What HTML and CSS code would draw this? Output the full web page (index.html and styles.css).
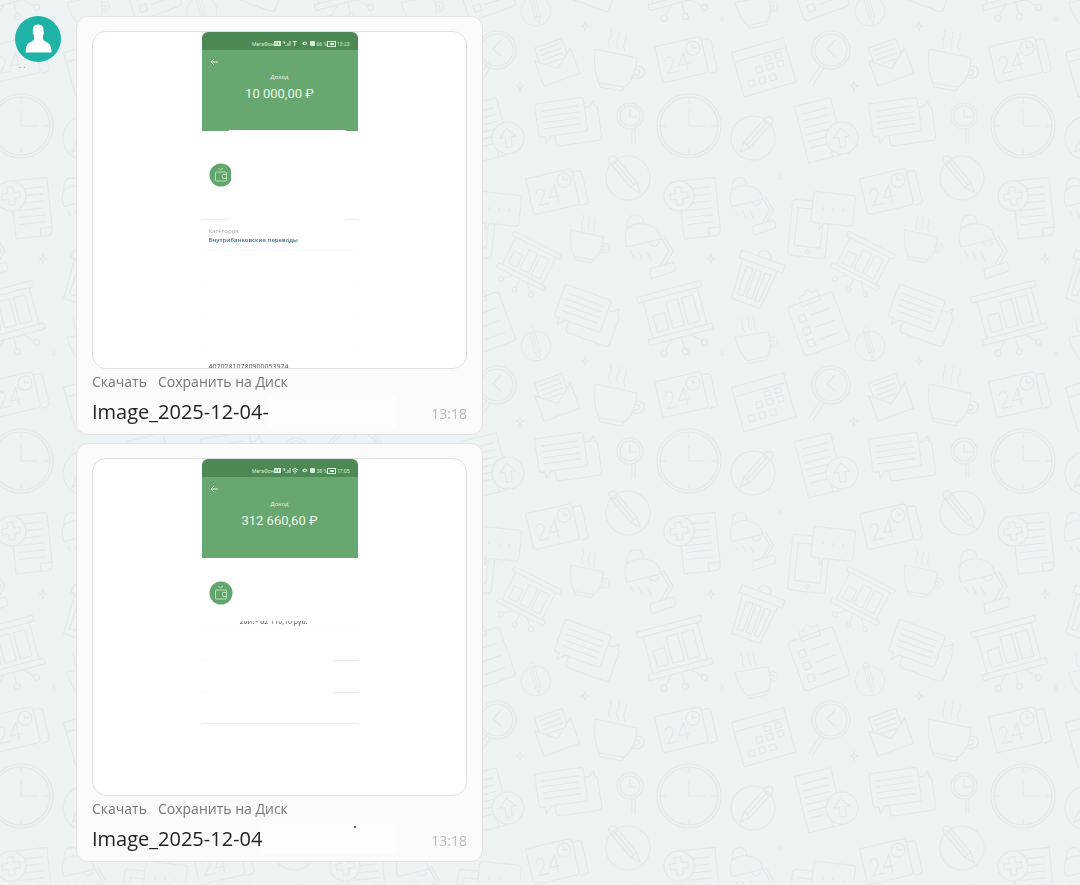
FILE: index.html
```html
<!DOCTYPE html>
<html lang="ru">
<head>
<meta charset="utf-8">
<title>Чат</title>
<meta name="viewport" content="width=device-width, initial-scale=1">
<link rel="stylesheet" href="styles.css">
</head>
<body>
<svg class="wallpaper" aria-hidden="true">
  <defs>
    <g id="cup">
      <path d="M-22-18L20-9Q18 14 7 20L-18 16Q-24 4-22-18ZM-18 16L-17 20L5 24L7 20M19-1Q29-1 27 7Q24 14 14 10M18 3Q24 2 22 7Q20 9 16 8M-7-19Q-10-25-6-31V-37M1-18Q-2-24 2-30V-35M8-16Q5-22 9-28V-33"/>
    </g>
    <g id="pencil">
      <circle r="22"/>
      <path d="M-4-20V9L0 19L4 9V-20M-4-20Q-5-27 0-28Q5-27 4-20ZM-4 9H4M0-20V9"/>
    </g>
    <g id="date">
      <path d="M-24-18H20Q23-18 23-14V16Q23 19 20 19H-21Q-24 19-24 16ZM23-14H30Q32-14 32-11V17Q32 20 29 20H24"/>
      <circle cx="13" cy="-8" r="7"/><path d="M13-12V-8H17"/>
      <path d="M-17-2Q-15-7-10-4Q-7 0-13 6L-17 11H-6M3 12V-6L-5 6H6"/>
    </g>
    <g id="board">
      <path d="M-33-25H33V-19H-33ZM-33 19H33V25H-33ZM-28-19V19M28-19V19M-22-3H-10V14H-22ZM-6-13H6V14H-6ZM10-13H22V14H10ZM-10 25L-19 34M0 25V37M10 25L19 34"/>
      <circle cx="-21" cy="36" r="3"/><circle cx="0" cy="40" r="3"/><circle cx="21" cy="36" r="3"/>
    </g>
    <g id="chat">
      <path d="M-24-20H19Q22-20 22-17V11Q22 14 19 14H-15L-21 21V14H-24Q-27 14-27 11V-17Q-27-20-24-20ZM-21-12H16M-21-6H16M-21 0H16M-21 6H16M22-10H27L32-15V-10Q35-9 35-5V21Q35 25 31 25H-7Q-11 25-11 21V14"/>
    </g>
    <g id="lamp">
      <path d="M-20-13Q-21-28-10-27Q-3-26-4-18Q12-17 14-3L-20 5Q-24-5-20-13ZM-20-13Q-14-19-4-18M2 1Q8 8 12 0M13-6L22 9L13 24M17-6L26 9L18 23M3 27L26 20Q30 25 28 29L4 37ZM-16 10L-13 15M-8 10L-5 17M0 10L4 18"/>
    </g>
    <g id="page">
      <path d="M-20-29H17V21Q17 29 11 29H-20ZM17 21H5V29M-15-20H11M-15-13H11M-15-6H11M-15 1H11M-15 8H11M-15 15H11"/>
    </g>
    <g id="star"><path d="M0-5Q0 0 4 0Q0 0 0 5Q0 0-4 0Q0 0 0-5Z"/></g>
    <g id="tile">
      <g><circle cx="497" cy="385" r="19"/><circle cx="497" cy="385" r="16"/><path d="M501 375L493 384L501 391M486 401L475 418M490 403L479 420"/></g>
      <g transform="translate(555 396) rotate(-20)"><path d="M-19-7L0 8L19-7V20H-19ZM-15-4V-19H14V-3M-11-15H10M-11-10H10M-11-5H10M-8 0H7"/></g>
      <use href="#cup" transform="translate(617 402)"/>
      <use href="#date" transform="translate(682 394) rotate(-13)"/>
      <g transform="translate(765 403) rotate(-16)"><path d="M-28-24H26V22H-28ZM-28-14H26M-20 8H-14V14H-20ZM-9 8H-3V14H-9ZM2 8H8V14H2ZM-9-3H-3V3H-9ZM2-3H8V3H2ZM13-3H19V3H13ZM2-11H8V-6H2ZM13-11H19V-6H13Z"/></g>
      <use href="#page" transform="translate(487 465) rotate(-14)"/>
      <g transform="translate(508 473) rotate(-8)"><circle class="fill" r="16"/><path d="M0-10L8-1H3V9H-3V-1H-8Z"/></g>
      <use href="#chat" transform="translate(564 455) rotate(-8)"/>
      <g><circle cx="630" cy="451" r="13"/><circle cx="630" cy="451" r="10"/><path d="M630 444V452H637M632 464V478M635 464V478"/></g>
      <g transform="translate(689 461)"><circle r="32"/><circle r="29"/><path d="M0-15V0H16M0-28V-23M0 23V28M-28 0H-23M23 0H28"/></g>
      <use href="#pencil" transform="translate(753 473) rotate(42)"/>
      <use href="#date" transform="translate(553 191) rotate(-13)"/>
      <use href="#pencil" transform="translate(628 178) rotate(-40)"/>
      <use href="#page" transform="translate(701 208) rotate(-6)"/>
      <g transform="translate(679 196) rotate(-8)"><circle class="fill" r="15"/><path d="M-3-9H3V-3H9V3H3V9H-3V3H-9V-3H-3Z"/></g>
      <use href="#lamp" transform="translate(750 202) scale(.9)"/>
      <g transform="translate(476 229) rotate(6)"><path d="M-16-28H14Q18-28 18-24V24Q18 28 14 28H-16Q-20 28-20 24V-24Q-20-28-16-28ZM-14-20H12V18H-14Z"/><circle cy="23" r="2"/><path class="fill" d="M3-38H39Q42-38 42-35V-10Q42-7 39-7H13L9 0V-7H3Q0-7 0-10V-35Q0-38 3-38Z"/><path d="M11-23V-21M21-23V-21M31-23V-21"/></g>
      <use href="#board" transform="translate(529 261) rotate(27) scale(.8)"/>
      <use href="#cup" transform="translate(588 244) scale(.78)"/>
      <use href="#lamp" transform="translate(647 242)"/>
      <g transform="translate(755 278) rotate(20)"><path d="M-22-22H24V-14H-22ZM-18-14L-15 27H15L19-14M-12-8H-5V21H-11ZM-2-8H4V21H-2ZM8-8H14L12 21H7ZM-5-22Q-5-29 1-29Q8-29 8-22"/></g>
      <g transform="translate(484 322) rotate(-20)"><path d="M-20-24H20Q24-24 24-20V24Q24 28 20 28H-20Q-24 28-24 24V-20Q-24-24-20-24ZM-10-24V-30H-4Q0-38 4-30H10V-20H-10ZM-17-12H-10V-5H-17ZM-17 1H-10V8H-17ZM-17 14H-10V21H-17ZM-4-9H16M-4 4H16M-4 17H16"/></g>
      <use href="#chat" transform="translate(584 312) rotate(20)"/>
      <use href="#board" transform="translate(675 313) rotate(-15)"/>
      <use href="#pencil" transform="translate(536 346) rotate(-15) scale(.68)"/>
      <use href="#cup" transform="translate(756 344) rotate(-22) scale(.78)"/>
      <use href="#star" transform="translate(711 259)"/>
      <use href="#star" transform="translate(585 361)"/>
      <use href="#star" transform="translate(520 421)"/>
      <use href="#star" transform="translate(722 354) scale(.6)"/>
      <use href="#star" transform="translate(780 178) scale(.6)"/>
    </g>
    <g id="column">
      <use href="#tile" y="-335"/><use href="#tile"/><use href="#tile" y="335"/><use href="#tile" y="670"/>
    </g>
    <g id="wallet">
      <circle cx="12" cy="12" r="11.500" fill="#62a56d"/>
      <g fill="none" stroke="#b9e0b5" stroke-width="1"><rect x="6.500" y="9" width="11" height="9" rx="1"/><path d="M17.500 11.500H14Q12.500 13.500 14 15.500H17.500ZM9.500 5L11.500 7L14 5"/></g>
    </g>
  </defs>
  <g class="doodles">
    <use href="#column" x="-668"/><use href="#column" x="-334"/><use href="#column"/><use href="#column" x="334"/><use href="#column" x="668"/>
  </g>
</svg>

<main class="chat">
  <div class="author">
    <svg class="avatar" viewBox="0 0 46 46" role="img" aria-label="Пользователь">
      <circle cx="23" cy="23" r="23" fill="#1fb3a8"/>
      <path fill="#fff" d="M23 8.500C18.500 8.500 17.500 11.500 18 15C17.500 17 18 18 19 19.500V23C18 26 13.500 26 12 29C11 31 10.800 33.500 10.800 36.500H36.500C36.500 33.500 36 31 35 29C33.500 26 29 26 28 23V19.500C29 18 29 17 28.500 15C29 11.500 27.500 8.500 23 8.500Z"/>
    </svg>
    <span class="author-name">. .</span>
  </div>
  <div class="messages">
    <article class="message">
      <div class="preview">
        <div class="phone">
          <div class="status">
            <span>МегаФон</span>
            <svg width="27" height="7" viewBox="0 0 27 7"><rect y="1" width="7" height="5" fill="#d7eed8"/><path d="M2 2.500V4.500M4.500 2.500V4.500" stroke="#4d8954"/><path d="M9 2H11L10 4M12 6V5M14 6V3M16 6V1M18.500 1.500H23M20.700 2V6" stroke="#d7eed8" fill="none"/></svg>
            <svg width="16" height="7" viewBox="0 0 16 7"><path d="M1 3.500Q4-.5 6.500 3.500Q4 7 1 3.500Z" fill="#d7eed8"/><circle cx="4" cy="3.500" r="1" fill="#4d8954"/><rect x="9" y="1" width="5" height="5" rx="1" fill="#d7eed8"/></svg>
            <span>66 %</span>
            <svg width="10" height="6" viewBox="0 0 10 6"><rect x=".5" y=".5" width="8" height="5" fill="none" stroke="#d7eed8"/><rect x="3" y="2" width="4" height="2" fill="#d7eed8"/></svg>
            <span>13:23</span>
          </div>
          <div class="summary notched">
            <svg class="back" width="8" height="8" viewBox="0 0 8 8"><path d="M8 4H1M4 1L1 4L4 7"/></svg>
            <span class="kind">Доход</span>
            <strong class="amount">10 000,00 ₽</strong>
          </div>
          <svg class="wallet cut" width="22" height="24"><use href="#wallet"/></svg>
          <div class="category">
            <span class="label">Категория</span>
            <span class="value">Внутрибанковские переводы</span>
          </div>
          <div class="blank-rows"><i></i><i></i><i></i></div>
          <span class="account">40702810780900053974</span>
        </div>
      </div>
      <nav class="actions"><a href="#">Скачать</a><a href="#">Сохранить на Диск</a></nav>
      <div class="file"><span class="file-name">Image_2025-12-04-</span><span class="erased"></span><time>13:18</time></div>
    </article>

    <article class="message">
      <div class="preview">
        <div class="phone">
          <div class="status">
            <span>МегаФон</span>
            <svg width="27" height="7" viewBox="0 0 27 7"><rect y="1" width="7" height="5" fill="#d7eed8"/><path d="M2 2.500V4.500M4.500 2.500V4.500" stroke="#4d8954"/><path d="M9 2H11L10 4M12 6V5M14 6V3M16 6V1M18 3Q21 0 24 3M19 4.500Q21 3 23 4.500M21 5V6.500" stroke="#d7eed8" fill="none"/></svg>
            <svg width="16" height="7" viewBox="0 0 16 7"><path d="M1 3.500Q4-.5 6.500 3.500Q4 7 1 3.500Z" fill="#d7eed8"/><circle cx="4" cy="3.500" r="1" fill="#4d8954"/><rect x="9" y="1" width="5" height="5" rx="1" fill="#d7eed8"/></svg>
            <span>38 %</span>
            <svg width="10" height="6" viewBox="0 0 10 6"><rect x=".5" y=".5" width="8" height="5" fill="none" stroke="#d7eed8"/><rect x="3" y="2" width="4" height="2" fill="#d7eed8"/></svg>
            <span>17:05</span>
          </div>
          <div class="summary">
            <svg class="back" width="8" height="8" viewBox="0 0 8 8"><path d="M8 4H1M4 1L1 4L4 7"/></svg>
            <span class="kind">Доход</span>
            <strong class="amount">312 660,60 ₽</strong>
          </div>
          <svg class="wallet high" width="24" height="24"><use href="#wallet"/></svg>
          <div class="trimmed"><span>20И.* 62 110,10 руб.</span></div>
          <div class="ruled-rows"><i></i><i></i><i></i></div>
        </div>
      </div>
      <nav class="actions"><a href="#">Скачать</a><a href="#">Сохранить на Диск</a></nav>
      <div class="file"><span class="file-name">Image_2025-12-04</span><span class="erased speck"></span><time>13:18</time></div>
    </article>
  </div>
</main>
</body>
</html>
```
FILE: styles.css
```css
* { box-sizing: border-box; }

body {
  margin: 0;
  background: #edf2f5;
  font-family: "Open Sans", "Noto Sans", sans-serif;
  color: #222;
}

.wallpaper {
  position: fixed;
  inset: 0;
  width: 100%;
  height: 100%;
  z-index: -1;
}
.doodles { fill: none; stroke: #e3e8eb; stroke-width: 1.2; stroke-linejoin: round; stroke-linecap: round; }
.doodles .fill, .fill { fill: #edf2f5; }

.chat { display: flex; align-items: flex-start; gap: 15px; padding: 16px 15px; }
.author { display: flex; flex-direction: column; flex: 0 0 46px; }
.avatar { width: 46px; height: 46px; }
.author-name { padding-left: 4px; font-size: 8px; line-height: 6px; color: #777; }

.messages { display: flex; flex-direction: column; gap: 8px; flex: 0 1 407px; min-width: 0; }
.message {
  padding: 14px 15px 6px;
  border: 1px solid #e0e4e6;
  border-radius: 12px;
  background: #fbfbfb;
}
.preview {
  height: 338px;
  overflow: hidden;
  border: 1px solid #dfe0e1;
  border-radius: 14px;
  background: #fff;
}
.phone {
  display: flex;
  flex-direction: column;
  width: 156px;
  margin: 0 auto;
  border-radius: 6px 6px 0 0;
  overflow: hidden;
}
.status {
  display: flex;
  align-items: center;
  justify-content: flex-end;
  height: 18px;
  padding: 5px 8px 0 0;
  background: #4d8954;
  color: #d7eed8;
  font: 5px/6px Roboto, sans-serif;
  white-space: nowrap;
}
.summary {
  display: grid;
  grid-template-rows: 22px 10px 24px;
  justify-items: center;
  height: 81px;
  background: #68a770;
  color: #e9f8e7;
}
.notched { border-bottom: 1px solid #fff; border-image: linear-gradient(90deg, #68a770 18%, #fff 18% 92%, #68a770 92%) 1; }
.back { justify-self: start; margin: 8px 0 0 8px; fill: none; stroke: #e3f5e0; stroke-width: 1; }
.kind { font-size: 6px; line-height: 10px; }
.amount { font: 400 13px/24px Roboto, sans-serif; white-space: nowrap; }

.wallet { margin: 32px 0 0 7px; }
.wallet.cut { overflow: hidden; }
.wallet.high { margin-top: 23px; }

.category {
  display: flex;
  flex-direction: column;
  height: 32px;
  margin-top: 32px;
  padding: 8px 7px 0;
  border-bottom: 1px solid #fafafa;
  background: linear-gradient(90deg, #eee 17%, #fff 17% 92%, #eee 92%) top / 100% 1px no-repeat;
  white-space: nowrap;
}
.label { font-size: 6px; line-height: 9px; color: #aaa; }
.value { font-size: 6px; line-height: 9px; color: #3c7187; font-weight: 600; }

.blank-rows i, .ruled-rows i { display: block; height: 32px; }
.blank-rows i { border-bottom: 1px solid; border-image: linear-gradient(90deg, #eee 3px, #fff 3px 153px, #eee 153px) 1; }
.account { padding: 15px 0 0 7px; font: 7px/10px "Open Sans", sans-serif; color: #555; white-space: nowrap; }

.trimmed { display: flex; align-items: flex-end; height: 5px; margin: 16px 0 0 38px; overflow: hidden; }
.trimmed span { font-size: 7px; line-height: 8px; color: #444; white-space: nowrap; }
.ruled-rows { border-top: 1px solid #fafafa; margin-top: 2px; }
.ruled-rows i { border-bottom: 1px solid; border-image: linear-gradient(90deg, #eee 3px, #fff 3px 130px, #eaeaea 130px) 1; }
.ruled-rows i:last-child { height: 31px; border-image: none; border-color: #ededed; }

.actions { display: flex; gap: 11px; padding-top: 3px; font-size: 14px; line-height: 20px; }
.actions a { color: #777; text-decoration: none; white-space: nowrap; }
.file { display: flex; align-items: center; height: 32px; margin-top: 4px; }
.file-name { font-size: 20px; line-height: 28px; white-space: nowrap; }
.erased { flex: 1; height: 30px; margin-right: 35px; background: #fdfdfd; }
.speck { background: radial-gradient(circle at 93px 3px, #666 1px, #fdfdfd 1px); }
.file time { font-size: 14px; line-height: 20px; padding-top: 4px; color: #bbb; }
```
